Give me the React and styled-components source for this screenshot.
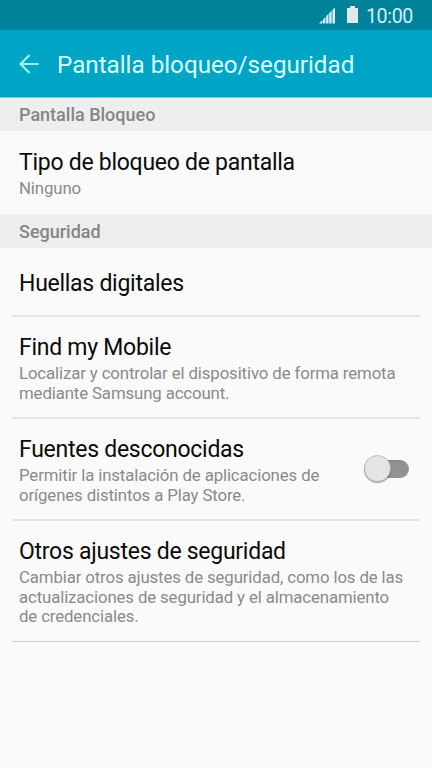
import React from "react";
import styled, { createGlobalStyle } from "styled-components";

const GlobalStyle = createGlobalStyle`
  * {
    box-sizing: border-box;
  }
  body {
    margin: 0;
    background-color: #fafafa;
    font-family: Roboto, sans-serif;
  }
`;

const Screen = styled.div`
  width: 432px;
  height: 768px;
  overflow: hidden;
  background-color: #fafafa;
`;

const StatusBar = styled.div`
  height: 30px;
  padding-right: 19px;
  display: flex;
  justify-content: flex-end;
  align-items: center;
  background-color: #00829b;
  .signal {
    margin-right: 11px;
  }
  .battery {
    margin-right: 8px;
    margin-top: -1px;
  }
`;

const Clock = styled.span`
  padding-top: 3px;
  font-size: 19.6px;
  line-height: 29px;
  letter-spacing: -0.35px;
  color: #d4eef3;
`;

const Toolbar = styled.header`
  height: 68px;
  padding: 0 0 0 19px;
  display: flex;
  align-items: center;
  background-color: #00a5c5;
  border-bottom: 1px solid #7ccddd;
  svg {
    margin-right: 18px;
  }
  h1 {
    margin: 0;
    padding-top: 2px;
    font-size: 24.2px;
    font-weight: 400;
    line-height: 30px;
    white-space: nowrap;
    color: #dcfdfe;
  }
`;

const SectionTitle = styled.h2`
  height: ${(props) => props.$height};
  margin: 0;
  padding-left: 19px;
  font-size: 18px;
  font-weight: 500;
  line-height: ${(props) => props.$line || "34px"};
  color: #868686;
  background-color: #eeeeee;
`;

const Row = styled.div`
  height: ${(props) => props.$height};
  margin: 0 12px;
  padding: ${(props) => props.$top || "17px"} 11px 0 7px;
  display: flex;
  justify-content: space-between;
  border-bottom: ${(props) => props.$line || "2px solid #e5e5e5"};
`;

const Title = styled.div`
  font-size: 23px;
  line-height: 28px;
  letter-spacing: -0.27px;
  white-space: nowrap;
  color: #0a0a0a;
`;

const Caption = styled.div`
  margin-top: 2px;
  font-size: 16.8px;
  line-height: 19.6px;
  letter-spacing: -0.12px;
  white-space: nowrap;
  color: #8a8a8a;
`;

const Switch = styled.div`
  width: 45px;
  height: 18px;
  margin-top: 24px;
  border-radius: 9px;
  background: linear-gradient(#868686, #929292 20%);
`;

const Thumb = styled.div`
  width: 27px;
  height: 27px;
  margin-top: -5px;
  border-radius: 50%;
  border: 1px solid #bdbdbd;
  background-color: #e4e4e4;
  box-shadow: 0 1px 1px rgba(0, 0, 0, 0.35);
`;

const SignalIcon = () => (
  <svg className="signal" width="17" height="17" viewBox="0 0 17 17" fill="#d4eef3">
    <path d="M0 16.5L3.4 13V16.5Z" />
    <path d="M4 12.5L6.4 10V16.5H4Z" />
    <path d="M7.1 9.3L9.5 6.8V16.5H7.1Z" />
    <path d="M10.2 6.2L12.6 3.7V16.5H10.2Z" />
    <path d="M13.4 3L16 0.4V16.5H13.4Z" />
  </svg>
);

const BatteryIcon = () => (
  <svg className="battery" width="11" height="17" viewBox="0 0 11 17" fill="#e0e8ea">
    <path d="M3 0H8V2H11V17H0V2H3Z" />
  </svg>
);

const BackIcon = () => (
  <svg width="20" height="20" viewBox="0 0 20 20" fill="none" stroke="#9af5f8" strokeWidth="2.2">
    <path d="M19.5 10H2M10.5 1L1.5 10L10.5 19" />
  </svg>
);

const App = () => {
  return (
    <>
      <GlobalStyle />
      <Screen>
        <StatusBar>
          <SignalIcon />
          <BatteryIcon />
          <Clock>10:00</Clock>
        </StatusBar>
        <Toolbar>
          <BackIcon />
          <h1>Pantalla bloqueo/seguridad</h1>
        </Toolbar>
        <SectionTitle $height="33px">Pantalla Bloqueo</SectionTitle>
        <Row $height="83px" $top="18px" $line="none">
          <div>
            <Title>Tipo de bloqueo de pantalla</Title>
            <Caption>Ninguno</Caption>
          </div>
        </Row>
        <SectionTitle $height="34px" $line="36px">
          Seguridad
        </SectionTitle>
        <Row $height="69px" $top="22px">
          <Title>Huellas digitales</Title>
        </Row>
        <Row $height="102px">
          <div>
            <Title>Find my Mobile</Title>
            <Caption>
              Localizar y controlar el dispositivo de forma remota
              <br />
              mediante Samsung account.
            </Caption>
          </div>
        </Row>
        <Row $height="102px">
          <div>
            <Title>Fuentes desconocidas</Title>
            <Caption>
              Permitir la instalación de aplicaciones de
              <br />
              orígenes distintos a Play Store.
            </Caption>
          </div>
          <Switch>
            <Thumb />
          </Switch>
        </Row>
        <Row $height="121px" $line="1px solid #cccccc">
          <div>
            <Title>Otros ajustes de seguridad</Title>
            <Caption>
              Cambiar otros ajustes de seguridad, como los de las
              <br />
              actualizaciones de seguridad y el almacenamiento
              <br />
              de credenciales.
            </Caption>
          </div>
        </Row>
      </Screen>
    </>
  );
};

export default App;
